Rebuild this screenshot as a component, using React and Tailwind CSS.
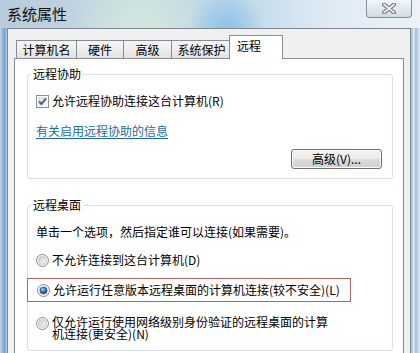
import React from "react";

const FONT = { fontFamily: '"Noto Sans CJK SC", "Noto Sans", sans-serif' };

function CheckBox() {
  return (
    <svg width="13" height="13" viewBox="0 0 13 13" className="shrink-0">
      <defs>
        <linearGradient id="cbg" x1="0" y1="0" x2="1" y2="1">
          <stop offset="0" stopColor="#d9dde2" />
          <stop offset="1" stopColor="#f7f8fa" />
        </linearGradient>
      </defs>
      <rect x="0.5" y="0.5" width="12" height="12" fill="#ffffff" stroke="#8e8f8f" />
      <rect x="2" y="2" width="9" height="9" fill="url(#cbg)" />
      <path d="M3 6.3 L5.4 9 L10 3.3" fill="none" stroke="#4b5f8c" strokeWidth="1.9" />
    </svg>
  );
}

function Radio({ checked }) {
  return (
    <svg width="13" height="13" viewBox="0 0 13 13" className="shrink-0">
      <defs>
        <linearGradient id="rg" x1="0" y1="0" x2="1" y2="1">
          <stop offset="0" stopColor="#cfcfcf" />
          <stop offset="1" stopColor="#f8f8f8" />
        </linearGradient>
        <radialGradient id="rs" cx="0.4" cy="0.35" r="0.7">
          <stop offset="0" stopColor="#a9d3f5" />
          <stop offset="0.45" stopColor="#3b7cc4" />
          <stop offset="1" stopColor="#173f7a" />
        </radialGradient>
      </defs>
      <circle cx="6.5" cy="6.5" r="6" fill="#f4f4f4" stroke="#8d8d8d" />
      {checked ? (
        <circle cx="6.5" cy="6.5" r="3.6" fill="url(#rs)" stroke="#2a4f80" strokeWidth="0.6" />
      ) : (
        <circle cx="6.5" cy="6.5" r="4" fill="url(#rg)" stroke="#c4c4c4" strokeWidth="0.8" />
      )}
    </svg>
  );
}

function Tab({ label, w, first }) {
  return (
    <div
      className={`h-[18px] ${first ? "" : "-ml-px"} border border-b-0 border-[#898c95] bg-[linear-gradient(#f5f5f5,#ececec_55%,#e2e2e2)] flex items-center justify-center text-[12px] leading-none text-black`}
      style={{ width: w }}
    >
      {label}
    </div>
  );
}

export default function App() {
  return (
    <div
      className="w-[420px] h-[353px] overflow-hidden flex flex-col bg-[radial-gradient(circle_at_54%_8%,#8ec1e8_0,rgba(142,193,232,0)_38px),radial-gradient(circle_at_33%_10%,#d4e8dc_0,rgba(212,232,220,0)_70px),linear-gradient(90deg,#b6cbdd,#c9dbe4_35%,#bcd7ea_55%,#dfeaf3_78%,#edf2f7)]"
      style={FONT}
    >
      {/* Title bar */}
      <div className="h-[28px] flex justify-between pl-[7px] pr-[8px] shrink-0">
        <div className="pt-[5px] text-[15px] leading-[18px] text-[#111]">系统属性</div>
        <div className="w-[46px] h-[18px] rounded-b-[4px] border border-t-0 border-[#7f8fa1] bg-[linear-gradient(#f6f8fb,#e3e9ef_50%,#d3dce6)] flex items-center justify-center">
          <svg width="14" height="11" viewBox="0 0 14 11">
            <path d="M2 1.5 L12 9.5 M12 1.5 L2 9.5" stroke="#6e737a" strokeWidth="4" strokeLinecap="round" />
            <path d="M2 1.5 L12 9.5 M12 1.5 L2 9.5" stroke="#ececec" strokeWidth="2" strokeLinecap="round" />
          </svg>
        </div>
      </div>

      {/* Body */}
      <div className="flex flex-1 min-h-0">
        <div className="w-[7px] shrink-0 bg-[linear-gradient(90deg,#c7d7e6,#8fb0d2_40%,#7ea4cd_70%,#b5cbe0)]" />
        <div className="w-[404px] shrink-0 bg-[#f0f0f0] border-l border-t border-r border-[#7d8893] pt-[6px]">
          {/* Tabs */}
          <div className="ml-[6px] w-[390px]">
            <div className="h-[23px] flex items-end pl-[2px]">
              <Tab label="计算机名" w={61} first />
              <Tab label="硬件" w={48} />
              <Tab label="高级" w={49} />
              <Tab label="系统保护" w={61} />
              <div className="relative z-10 -ml-[3px] mb-[-1px] w-[54px] h-[24px] border border-b-0 border-[#898c95] bg-white pl-[7px] pt-[3px] text-[12px] leading-[14px] text-black">
                远程
              </div>
            </div>

            {/* Panel */}
            <div className="h-[300px] border border-[#898c95] bg-white pt-[7px]">
              {/* 远程协助 */}
              <fieldset className="ml-[12px] w-[366px] border border-[#d5dfe5] rounded-[3px] p-0 m-0">
                <legend className="ml-[3px] px-[2px] text-[12px] leading-[16px] text-black">远程协助</legend>
                <div className="pl-[8px] pr-[10px] pt-[11px] pb-[9px] flex flex-col">
                  <div className="h-[16px] flex items-center gap-[3px] text-[12px] leading-[16px] text-black">
                    <CheckBox />
                    <span>允许远程协助连接这台计算机(R)</span>
                  </div>
                  <div className="mt-[14px] h-[16px] text-[12px] leading-[16px] text-[#1c6ba4] underline underline-offset-2">
                    有关启用远程协助的信息
                  </div>
                  <div className="mt-[10px] flex justify-end">
                    <div className="w-[91px] h-[20px] rounded-[3px] border border-[#707070] bg-[linear-gradient(#f3f3f3,#ebebeb_50%,#dcdcdc_50%,#cfcfcf)] shadow-[inset_0_0_0_1px_#fbfbfb] flex items-center justify-center text-[12px] leading-none text-black">
                      高级(V)...
                    </div>
                  </div>
                </div>
              </fieldset>

              {/* 远程桌面 */}
              <fieldset className="mt-[18px] ml-[12px] w-[366px] border border-[#d5dfe5] rounded-[3px] p-0">
                <legend className="ml-[3px] px-[2px] text-[12px] leading-[16px] text-black">远程桌面</legend>
                <div className="pl-[8px] pr-[10px] pt-[11px] pb-[10px] flex flex-col text-[12px] text-black">
                  <div className="h-[16px] leading-[16px]">单击一个选项，然后指定谁可以连接(如果需要)。</div>
                  <div className="mt-[12px] h-[16px] flex items-center gap-[3px] leading-[16px]">
                    <Radio />
                    <span>不允许连接到这台计算机(D)</span>
                  </div>
                  <div className="mt-[10px] -ml-[9px] w-[324px] h-[24px] border border-[#b8655e] pl-[9px] flex items-center gap-[3px] leading-[16px]">
                    <Radio checked />
                    <span>允许运行任意版本远程桌面的计算机连接(较不安全)(L)</span>
                  </div>
                  <div className="mt-[15px] flex items-start gap-[3px]">
                    <Radio />
                    <span className="w-[280px] leading-[12px] -mt-px">
                      仅允许运行使用网络级别身份验证的远程桌面的计算机连接(更安全)(N)
                    </span>
                  </div>
                </div>
              </fieldset>
            </div>
          </div>
        </div>
        <div className="flex-1 bg-[linear-gradient(90deg,#9fb7cf,#dfe9f2_30%,#9fc0dd_55%,#e6eef5)]" />
      </div>
    </div>
  );
}
